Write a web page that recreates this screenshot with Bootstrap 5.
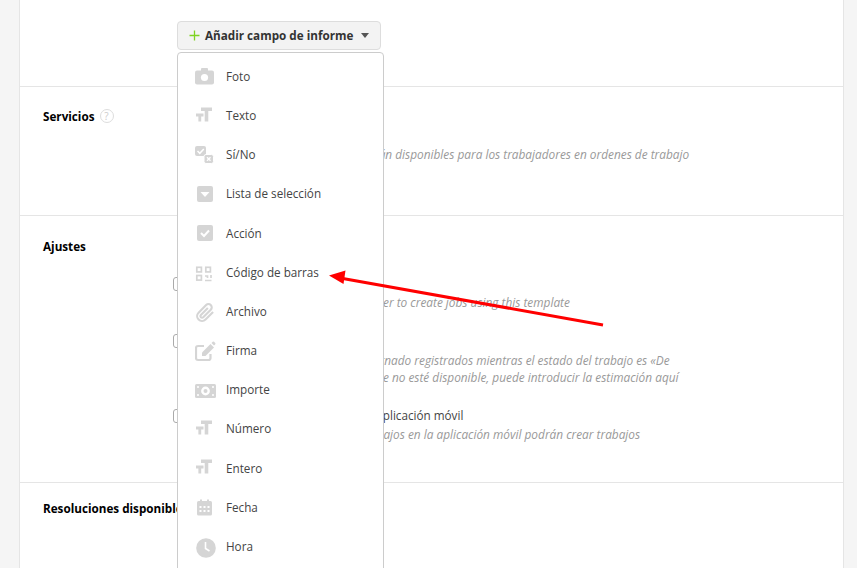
<!DOCTYPE html>
<html lang="es">
<head>
<meta charset="utf-8">
<title>Plantilla</title>
<link rel="stylesheet" href="https://cdn.jsdelivr.net/npm/bootstrap@5.3.0/dist/css/bootstrap.min.css">
<style>
html,body{height:100%;overflow:hidden;background:#f5f5f5;}
body{font-family:"Open Sans","Liberation Sans",sans-serif;font-size:11.7px;color:#444;}
.sheet{height:568px;margin:0 13px 0 19px;background:#fff;border-left:1px solid #e5e5e5;border-right:1px solid #e5e5e5;overflow:hidden;}
.band{display:grid;grid-template-columns:134px 1fr;border-bottom:1px solid #e5e5e5;padding-left:23px;}
.band-top{height:87px;padding-top:21px;}
.band-serv{height:129px;padding-top:20px;}
.band-adj{height:267px;padding-top:21px;}
.band-res{padding-top:16px;border-bottom:0;}
.side-label{font-weight:700;color:#000;line-height:18px;white-space:nowrap;}
.qmark{display:inline-flex;align-items:center;justify-content:center;width:14px;height:14px;margin-left:2px;border:1px solid #ddd;border-radius:50%;color:#ccc;font-size:10px;font-weight:400;vertical-align:1px;}
.add-btn{--bs-btn-bg:#f3f3f3;--bs-btn-border-color:#ddd;--bs-btn-hover-bg:#f3f3f3;--bs-btn-hover-border-color:#ddd;--bs-btn-color:#333;--bs-btn-font-size:11.7px;--bs-btn-font-weight:700;--bs-btn-border-radius:4px;--bs-btn-padding-x:11px;--bs-btn-padding-y:0;height:29px;width:204px;display:flex;align-items:center;white-space:nowrap;}
.add-btn.dropdown-toggle::after{margin-left:8px;border-top:5px solid #555;border-right:4.5px solid transparent;border-left:4.5px solid transparent;border-bottom:0;}
.plus{display:flex;color:#7ed321;width:16px;flex:none;}
.field-menu{--bs-dropdown-min-width:207px;--bs-dropdown-border-color:#ccc;--bs-dropdown-border-radius:4px;--bs-dropdown-padding-y:4.15px;--bs-dropdown-link-color:#444;--bs-dropdown-font-size:11.7px;width:207px;height:560px;top:31px;left:0;margin:0;z-index:5;}
.field-menu .dropdown-item{height:39.17px;display:flex;align-items:center;gap:9px;padding:0 0 0 17px;}
.glyph{width:22px;height:22px;flex:none;color:#d5d5d5;}
.helper{font-style:italic;font-size:11.85px;color:#999;line-height:17px;white-space:nowrap;}
.opt{display:flex;gap:8px;margin-left:-4px;position:absolute;white-space:nowrap;}
.tick{width:14px;height:14px;margin-top:2px;border:1px solid #aaa;border-radius:3px;flex:none;background:#fff;}
.opt-title{line-height:19px;color:#444;}
.opt-stack{position:relative;height:240px;}
.opt-1{top:38px;}.opt-2{top:95px;}.opt-3{top:169px;}
.opt-2 .helper,.opt-3 .helper{margin-top:1px;}
.opt-3 .tick{margin-top:3px;}
.pointer{position:absolute;left:0;top:0;z-index:10;pointer-events:none;}
.serv-help{margin-top:39px;padding-left:32px;}
</style>
</head>
<body>
<div class="sheet">
  <section class="band band-top">
    <div></div>
    <div class="dropdown position-relative">
      <button class="btn add-btn dropdown-toggle" type="button"><span class="plus"><svg width="11" height="11" viewBox="0 0 11 11"><path d="M5.500 0.500v10M0.500 5.500h10" stroke="currentColor" stroke-width="1.300"/></svg></span>Añadir campo de informe</button>
      <ul class="dropdown-menu show field-menu list-unstyled">
        <li><a class="dropdown-item" href="#"><svg class="glyph" viewBox="0 0 22 22" fill="currentColor"><rect x="0" y="4.500" width="19" height="14" rx="2"/><rect x="6" y="2" width="7" height="5" rx="1"/><circle cx="9.500" cy="11.500" r="3.600" fill="#fff"/></svg>Foto</a></li>
        <li><a class="dropdown-item" href="#"><svg class="glyph" viewBox="0 0 22 22" fill="currentColor"><path d="M6 2.500h11v3.500h-3.700v10.500H9.700V6H6zM1 8.500h7.500v3H6.200v5H3.400v-5H1z"/></svg>Texto</a></li>
        <li><a class="dropdown-item" href="#"><svg class="glyph" viewBox="0 0 22 22" fill="currentColor"><rect x="0" y="2" width="11" height="10" rx="2"/><path d="M2.500 7l2.300 2.300L8.800 5" fill="none" stroke="#fff" stroke-width="1.500"/><rect x="9" y="10.500" width="9.500" height="9" rx="2" stroke="#fff" stroke-width="1"/><path d="M12 13.200l3.500 3.500M15.500 13.200L12 16.700" stroke="#fff" stroke-width="1.400"/></svg>Sí/No</a></li>
        <li><a class="dropdown-item" href="#"><svg class="glyph" viewBox="0 0 22 22" fill="currentColor"><rect x="2" y="3" width="16" height="16" rx="2"/><path d="M5.500 9h9L10 14z" fill="#fff"/></svg>Lista de selección</a></li>
        <li><a class="dropdown-item" href="#"><svg class="glyph" viewBox="0 0 22 22" fill="currentColor"><rect x="2" y="3" width="16" height="16" rx="2"/><path d="M6 11l3 3 5-5.500" fill="none" stroke="#fff" stroke-width="2"/></svg>Acción</a></li>
        <li><a class="dropdown-item" href="#"><svg class="glyph" viewBox="0 0 22 22" fill="none" stroke="currentColor" stroke-width="1.700"><rect x="1.800" y="5.300" width="4.600" height="4.600"/><rect x="10.800" y="5.300" width="4.600" height="4.600"/><rect x="1.800" y="13.500" width="4.600" height="4.600"/><path d="M10 14h2.500v2M16 13v3M10 18.500h6.500"/></svg>Código de barras</a></li>
        <li><a class="dropdown-item" href="#"><svg class="glyph" viewBox="0 0 22 22" fill="none" stroke="currentColor" stroke-width="2.600"><path transform="translate(0.500 2) scale(.82)" d="M21.440 11.050l-9.190 9.190a6 6 0 0 1-8.490-8.490l9.190-9.190a4 4 0 0 1 5.660 5.660l-9.200 9.190a2 2 0 0 1-2.830-2.830l8.490-8.480"/></svg>Archivo</a></li>
        <li><a class="dropdown-item" href="#"><svg class="glyph" viewBox="0 0 22 22" fill="none" stroke="currentColor"><path d="M15.500 14v4a2 2 0 0 1-2 2H3a2 2 0 0 1-2-2V8a2 2 0 0 1 2-2h6" stroke-width="2.200"/><path d="M7 12.500L15.500 4l3.500 3.500-8.500 8.500H7z" fill="currentColor" stroke="none"/><path d="M16.500 3l1.200-1.200a1 1 0 0 1 1.400 0l1.100 1.100a1 1 0 0 1 0 1.400L19 5.500z" fill="currentColor" stroke="none"/></svg>Firma</a></li>
        <li><a class="dropdown-item" href="#"><svg class="glyph" viewBox="0 0 22 22" fill="currentColor"><rect x="0" y="5" width="21" height="14" rx="1.500"/><circle cx="10.500" cy="12" r="4.400" fill="#fff"/><circle cx="10.500" cy="12" r="2" /><g fill="#fff"><circle cx="3" cy="8" r="1"/><circle cx="18" cy="8" r="1"/><circle cx="3" cy="16" r="1"/><circle cx="18" cy="16" r="1"/></g></svg>Importe</a></li>
        <li><a class="dropdown-item" href="#"><svg class="glyph" viewBox="0 0 22 22" fill="currentColor"><path d="M6 2.500h11v3.500h-3.700v10.500H9.700V6H6zM1 8.500h7.500v3H6.200v5H3.400v-5H1z"/></svg>Número</a></li>
        <li><a class="dropdown-item" href="#"><svg class="glyph" viewBox="0 0 22 22" fill="currentColor"><path d="M6 2.500h11v3.500h-3.700v10.500H9.700V6H6zM1 8.500h7.500v3H6.200v5H3.400v-5H1z"/></svg>Entero</a></li>
        <li><a class="dropdown-item" href="#"><svg class="glyph" viewBox="0 0 22 22" fill="currentColor"><rect x="2" y="5" width="15" height="14.500" rx="1.500"/><rect x="5" y="3.500" width="2" height="3"/><rect x="12" y="3.500" width="2" height="3"/><g fill="#fff"><rect x="4.500" y="10" width="2" height="2"/><rect x="8.500" y="10" width="2" height="2"/><rect x="12.500" y="10" width="2" height="2"/><rect x="4.500" y="14" width="2" height="2"/><rect x="8.500" y="14" width="2" height="2"/><rect x="12.500" y="14" width="2" height="2"/></g></svg>Fecha</a></li>
        <li><a class="dropdown-item" href="#"><svg class="glyph" viewBox="0 0 22 22" fill="currentColor"><circle cx="11" cy="12" r="9.800"/><path d="M10.500 6v6.500l4 2.500" fill="none" stroke="#fff" stroke-width="1.600"/></svg>Hora</a></li>
      </ul>
    </div>
  </section>
  <section class="band band-serv">
    <div class="side-label">Servicios <span class="qmark">?</span></div>
    <div class="helper serv-help">Los servicios seleccionados estarán disponibles para los trabajadores en ordenes de trabajo</div>
  </section>
  <section class="band band-adj">
    <div class="side-label">Ajustes</div>
    <div class="opt-stack">
      <div class="opt opt-1"><span class="tick"></span><div><div class="opt-title">Crear trabajos</div><div class="helper">Enable this setting to allow the worker to create jobs using this template</div></div></div>
      <div class="opt opt-2"><span class="tick"></span><div><div class="opt-title">Tiempo estimado</div><div class="helper">Tiempo de viajes del trabajador asignado registrados mientras el estado del trabajo es «De<br>camino». Cada vez que el kilometraje no esté disponible, puede introducir la estimación aquí</div></div></div>
      <div class="opt opt-3"><span class="tick"></span><div><div class="opt-title">Permitir añadir trabajos desde la aplicación móvil</div><div class="helper">Los trabajadores con accesos a trabajos en la aplicación móvil podrán crear trabajos</div></div></div>
    </div>
  </section>
  <section class="band band-res">
    <div class="side-label">Resoluciones disponibles</div>
    <div></div>
  </section>
</div>
<svg class="pointer" width="857" height="568" viewBox="0 0 857 568"><path d="M603 325L340 278" stroke="#f00" stroke-width="3" fill="none"/><path d="M329 275.500L345.500 270.500L343.500 284z" fill="#f00"/></svg>
<script src="https://cdn.jsdelivr.net/npm/bootstrap@5.3.0/dist/js/bootstrap.bundle.min.js"></script>
</body>
</html>
